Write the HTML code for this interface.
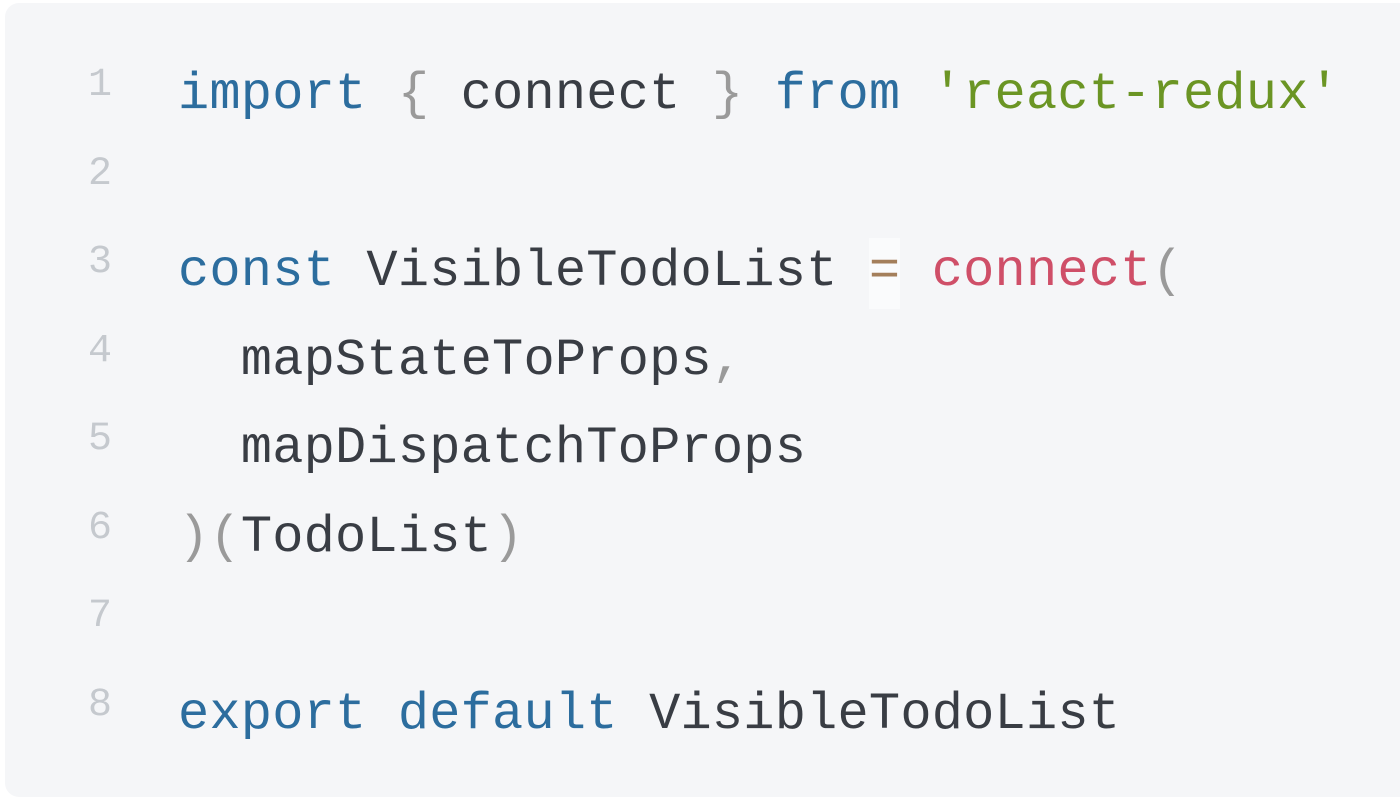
<!DOCTYPE html>
<html><head><style>
html,body{margin:0;padding:0;background:#fff;width:1400px;height:803px;overflow:hidden}
.box{position:absolute;left:5px;top:3px;width:1420px;height:794px;background:#f5f6f8;border-radius:14px}
.ln{position:absolute;left:0;width:112px;text-align:right;font:40px "Liberation Mono",monospace;color:#c5c9ce;height:88px;line-height:88px}
.cd{position:absolute;left:178px;font:52px "Liberation Mono",monospace;letter-spacing:0.2px;color:#393d44;white-space:pre;height:88px;line-height:88px}
.k{color:#2c6d9e}.s{color:#6b9524}.p{color:#9a9a9a}.f{color:#cf4f68}.o{color:#a47f5b;background:#fafbfc;padding:4px 0 8px}
</style></head><body>
<div class="box"></div>
<div class="ln" style="top:42px">1</div><div class="cd" style="top:51px"><span class="k">import</span> <span class="p">{</span> connect <span class="p">}</span> <span class="k">from</span> <span class="s">'react-redux'</span></div>
<div class="ln" style="top:131px">2</div>
<div class="ln" style="top:219px">3</div><div class="cd" style="top:228px"><span class="k">const</span> VisibleTodoList <span class="o">=</span> <span class="f">connect</span><span class="p">(</span></div>
<div class="ln" style="top:308px">4</div><div class="cd" style="top:317px">  mapStateToProps<span class="p">,</span></div>
<div class="ln" style="top:396px">5</div><div class="cd" style="top:405px">  mapDispatchToProps</div>
<div class="ln" style="top:485px">6</div><div class="cd" style="top:494px"><span class="p">)(</span>TodoList<span class="p">)</span></div>
<div class="ln" style="top:573px">7</div>
<div class="ln" style="top:662px">8</div><div class="cd" style="top:671px"><span class="k">export</span> <span class="k">default</span> VisibleTodoList</div>
</body></html>
